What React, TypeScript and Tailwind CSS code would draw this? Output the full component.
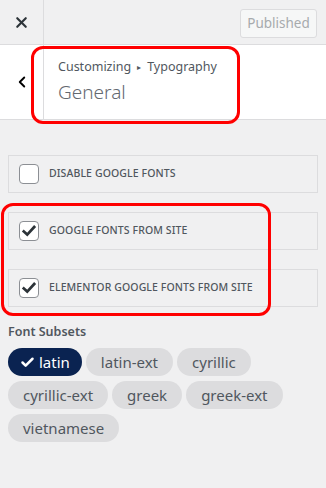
import { X, ChevronLeft, Check } from 'lucide-react'

const rows = [
  { label: 'DISABLE GOOGLE FONTS', checked: false },
  { label: 'GOOGLE FONTS FROM SITE', checked: true },
  { label: 'ELEMENTOR GOOGLE FONTS FROM SITE', checked: true },
]

const subsets = ['latin', 'latin-ext', 'cyrillic', 'cyrillic-ext', 'greek', 'greek-ext', 'vietnamese']

function CheckIcon() {
  return (
    <svg viewBox="0 0 20 20" className="w-[16px] h-[16px]">
      <path d="M3.5 10.5 L7.8 14.5 L16.5 5" fill="none" stroke="#2c3338" strokeWidth="3.4" strokeLinecap="square" />
    </svg>
  )
}

export default function App() {
  return (
    <div className="relative w-[326px] h-[488px] bg-[#f0f0f1] overflow-hidden font-['Noto_Sans',sans-serif] text-[#50575e]">
      {/* Top bar */}
      <div className="h-[45px] flex items-stretch border-b border-[#dcdcde]">
        <button className="w-[44px] flex items-center justify-center border-r border-[#dcdcde]">
          <X className="w-[17px] h-[17px] text-[#2c3338]" strokeWidth={3} />
        </button>
        <div className="flex-1 flex items-start justify-end pr-[9px] pt-[9px]">
          <div className="h-[29px] w-[77px] flex items-center justify-center rounded-[3px] border border-[#dcdcde] bg-[#f6f7f7] text-[13.5px] text-[#a7aaad]">
            Published
          </div>
        </div>
      </div>

      {/* Section header */}
      <div className="h-[75px] flex bg-white border-b border-[#dcdcde]">
        <button className="w-[44px] flex items-center justify-center border-r border-[#dcdcde]">
          <ChevronLeft className="w-[18px] h-[18px] text-black" strokeWidth={2.5} />
        </button>
        <div className="pl-[14px] pt-[13px]">
          <div className="text-[12.5px] leading-[18px] text-[#50575e] flex items-center gap-[6px]">
            <span>Customizing</span>
            <span className="text-[8px]">▸</span>
            <span>Typography</span>
          </div>
          <div className="mt-[4px] text-[19px] leading-[24px] font-light text-[#646970]">General</div>
        </div>
      </div>

      {/* Checkbox rows */}
      <div className="px-[8px] pt-[35px] flex flex-col gap-[19px]">
        {rows.map((r) => (
          <div key={r.label} className="h-[38px] flex items-center gap-[10px] px-[10px] border border-[#dcdcde]">
            <div className="w-[20px] h-[20px] rounded-[4px] border border-[#8c8f94] bg-white flex items-center justify-center">
              {r.checked && <CheckIcon />}
            </div>
            <span className="text-[10.5px] tracking-[0.1px] font-medium text-[#50575e]">{r.label}</span>
          </div>
        ))}
      </div>

      {/* Font subsets */}
      <div className="px-[8px] pt-[16px]">
        <div className="text-[12.5px] font-semibold text-[#50575e] leading-[18px]">Font Subsets</div>
        <div className="mt-[7px] flex flex-wrap gap-x-[4px] gap-y-[5px] w-[290px]">
          {subsets.map((s, i) => (
            <div
              key={s}
              className={
                i === 0
                  ? 'h-[28px] px-[12px] rounded-full bg-[#0a2351] text-white text-[15px] flex items-center gap-[4px]'
                  : 'h-[28px] px-[15px] rounded-full bg-[#dcdcde] text-[#50575e] text-[15px] flex items-center'
              }
            >
              {i === 0 && <Check className="w-[15px] h-[15px]" strokeWidth={4} />}
              {s}
            </div>
          ))}
        </div>
      </div>

      {/* Highlight overlays */}
      <div className="absolute left-[31px] top-[46px] w-[209px] h-[78px] border-[3.5px] border-[#ff0000] rounded-[12px] pointer-events-none" />
      <div className="absolute left-[1px] top-[203px] w-[270px] h-[113px] border-[3.5px] border-[#ff0000] rounded-[12px] pointer-events-none" />
    </div>
  )
}
